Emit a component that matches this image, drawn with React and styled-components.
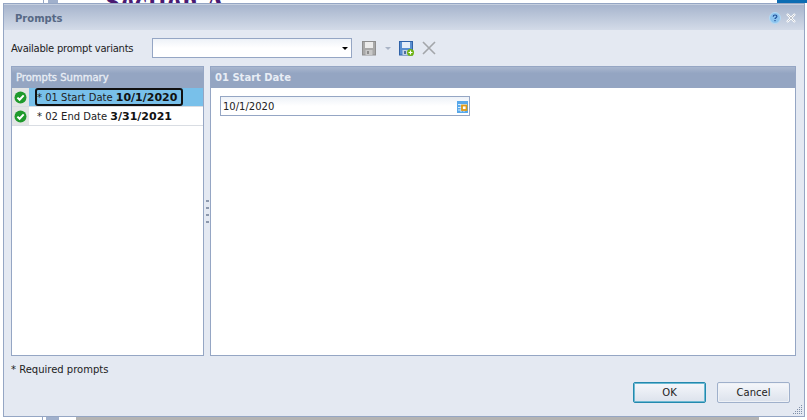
import styled, { createGlobalStyle } from "styled-components";

const Global = createGlobalStyle`
  html, body {
    margin: 0;
    padding: 0;
    width: 807px;
    height: 420px;
    overflow: hidden;
    background: #ffffff;
    font-family: "DejaVu Sans", Verdana, sans-serif;
  }
`;

const Page = styled.div`
  position: relative;
  width: 807px;
  height: 420px;
  overflow: hidden;
  background: #fff;
`;

const Backdrop = styled.div`
  position: absolute;
  inset: 0;
  overflow: hidden;
`;

const BackTitle = styled.span`
  position: absolute;
  left: 105px;
  top: -13px;
  font-family: "Liberation Serif", serif;
  font-size: 27px;
  font-weight: 700;
  color: #4a1a72;
  letter-spacing: 1.4px;
`;

const BackStrip = styled.div`
  position: absolute;
  left: ${(p) => p.$left}px;
  top: ${(p) => p.$top}px;
  width: ${(p) => p.$width}px;
  height: ${(p) => p.$height}px;
  background: ${(p) => p.$bg};
`;

const Dialog = styled.div`
  position: absolute;
  left: 3px;
  top: 3px;
  width: 802px;
  height: 414px;
  box-sizing: border-box;
  border: 1px solid #95a6c4;
  background: #e4e9f2;
  display: flex;
  flex-direction: column;
`;

const TitleBar = styled.div`
  height: 26px;
  flex: none;
  display: flex;
  align-items: center;
  justify-content: space-between;
  padding: 2px 8px 0 11px;
  box-sizing: border-box;
  background: linear-gradient(#a5b3cc, #d3dbe8);
  box-shadow: inset 0 1px 0 #c5cfdf;
`;

const Title = styled.span`
  font-size: 10px;
  font-weight: 700;
  color: #566885;
`;

const TitleIcons = styled.div`
  display: flex;
  align-items: center;
  gap: 5px;
`;

const VariantRow = styled.div`
  height: 36px;
  flex: none;
  display: flex;
  align-items: center;
  padding: 0 0 0 7px;
`;

const Label = styled.span`
  width: 141px;
  font-size: 10px;
  letter-spacing: -0.25px;
  color: #222;
`;

const Select = styled.div`
  width: 200px;
  height: 20px;
  box-sizing: border-box;
  border: 1px solid #95a6c4;
  background: linear-gradient(#eef2f8, #fff 50%);
  display: flex;
  align-items: center;
  justify-content: flex-end;
  padding-right: 3px;
`;

const Arrow = styled.span`
  width: 0;
  height: 0;
  border-left: 3px solid transparent;
  border-right: 3px solid transparent;
  border-top: 3px solid ${(p) => p.$color || "#000"};
`;

const Tools = styled.div`
  display: flex;
  align-items: center;
  margin-left: 10px;
  gap: 8px;
`;

const Panels = styled.div`
  height: 290px;
  flex: none;
  display: flex;
  gap: 6px;
  padding: 0 8px 0 7px;
`;

const Panel = styled.div`
  box-sizing: border-box;
  border: 1px solid #95a6c4;
  background: #fff;
  display: flex;
  flex-direction: column;
  ${(p) => (p.$width ? `width: ${p.$width}px; flex: none;` : "flex: 1;")}
`;

const PanelHead = styled.div`
  height: 21px;
  flex: none;
  display: flex;
  align-items: center;
  padding-left: 4px;
  font-size: 10px;
  font-weight: ${(p) => (p.$narrow ? 400 : 700)};
  color: #e8edf5;
  -webkit-text-stroke: ${(p) => (p.$narrow ? "0.35px #e8edf5" : "0")};
  background: linear-gradient(#a9b7cf 0, #94a5c2 30%, #94a5c2 100%);
`;

const SummaryRow = styled.div`
  height: 18px;
  display: flex;
  align-items: stretch;
  border-bottom: 1px solid #d9dde3;
  box-sizing: content-box;
`;

const StatusCell = styled.div`
  width: 17px;
  flex: none;
  background: #e3e5e5;
  display: flex;
  align-items: center;
  justify-content: center;
`;

const RowBody = styled.div`
  flex: 1;
  display: flex;
  align-items: center;
  padding-left: 6px;
  background: ${(p) => (p.$selected ? "#78c0ea" : "#fff")};
  font-size: 10px;
  color: #222;
`;

const RowText = styled.span`
  box-sizing: border-box;
  height: 18px;
  display: flex;
  align-items: center;
  padding: 0 1px 0 2px;
  white-space: pre;
  ${(p) =>
    p.$focused &&
    "border: 2px solid #111; border-radius: 3px; margin-left: 0; padding: 0 4px 0 0;"}

  b {
    font-size: 11px;
    color: #111;
  }
`;

const Grip = styled.div`
  position: absolute;
  left: 202px;
  top: 196px;
  display: flex;
  flex-direction: column;
  gap: 5px;

  i {
    display: block;
    width: 3px;
    height: 2px;
    background: #8c98ad;
  }
`;

const PanelBody = styled.div`
  padding: 8px 9px;
`;

const DateField = styled.div`
  width: 250px;
  height: 20px;
  box-sizing: border-box;
  border: 1px solid #95a6c4;
  background: linear-gradient(#eef2f8, #fff 50%);
  display: flex;
  align-items: center;
  justify-content: space-between;
  padding: 1px 0 0 2px;
  font-size: 10px;
  color: #222;
`;

const Required = styled.div`
  height: 26px;
  flex: none;
  display: flex;
  align-items: center;
  padding-left: 7px;
  font-size: 10px;
  color: #222;
`;

const Footer = styled.div`
  flex: 1;
  display: flex;
  justify-content: flex-end;
  gap: 11px;
  padding-right: 14px;
`;

const Button = styled.button`
  width: 73px;
  height: 21px;
  box-sizing: border-box;
  padding: 0;
  border: 1px solid ${(p) => (p.$primary ? "#2389ae" : "#9fb0cb")};
  border-radius: 2px;
  background: linear-gradient(#f5f7fb, #dce2ec);
  box-shadow: ${(p) => (p.$primary ? "inset 0 0 0 1px #6db9d2" : "inset 0 0 0 1px #eef1f6")};
  font-family: "DejaVu Sans", Verdana, sans-serif;
  font-size: 10px;
  color: #222;
`;

const Resize = styled.svg`
  position: absolute;
  right: 1px;
  bottom: 1px;
`;

const Check = () => (
  <svg width="13" height="13" viewBox="0 0 13 13">
    <circle cx="6.5" cy="6.5" r="6" fill="#1f9a2c" />
    <path d="M3.4 6.6 5.6 8.8 9.7 4.4" fill="none" stroke="#fff" strokeWidth="2" />
  </svg>
);

const SaveIcon = ({ active }) => (
  <svg width="15" height="15" viewBox="0 0 15 15">
    <rect x="0.5" y="0.5" width="13" height="13.5" fill={active ? "#5a8fd0" : "#a9a9a9"} stroke={active ? "#2f62a8" : "#8f8f8f"} />
    <rect x="3" y="1" width="8" height="6" fill={active ? "#e6eef8" : "#ececec"} />
    <rect x="3.5" y="9" width="7" height="5" fill={active ? "#c4d2e4" : "#c8c8c8"} />
    <rect x="5" y="10" width="2" height="3" fill={active ? "#4f6f9c" : "#8c8c8c"} />
    {active && <circle cx="11.5" cy="11.5" r="3.5" fill="#6cb310" />}
    {active && <path d="M11.5 9.5v4M9.5 11.5h4" stroke="#fff" strokeWidth="1.2" />}
  </svg>
);

const CloseGray = () => (
  <svg width="14" height="14" viewBox="0 0 14 14">
    <path d="M1 1 13 13M13 1 1 13" stroke="#a3a6aa" strokeWidth="1.6" />
  </svg>
);

const Help = () => (
  <svg width="12" height="12" viewBox="0 0 12 12">
    <circle cx="6" cy="6" r="5.5" fill="#8cc4ee" stroke="#b5d9f3" />
    <path d="M4.2 4.6C4.3 3.4 5.1 3 6 3c1.1 0 1.9.6 1.9 1.5C7.9 5.7 6 5.6 6 7" fill="none" stroke="#1f4f99" strokeWidth="1.2" />
    <rect x="5.4" y="8" width="1.2" height="1.2" fill="#1f4f99" />
  </svg>
);

const CloseWhite = () => (
  <svg width="10" height="10" viewBox="0 0 10 10">
    <path d="M1 1 9 9M9 1 1 9" stroke="#fff" strokeWidth="2.2" />
    <path d="M1.5 1.5 8.5 8.5M8.5 1.5 1.5 8.5" stroke="#59667a" strokeWidth="0.4" />
  </svg>
);

const Calendar = () => (
  <svg width="12" height="12" viewBox="0 0 12 12">
    <rect x="0" y="0" width="11" height="12" fill="#58a8ea" />
    <path d="M1 3.5h9M1 6.500h9M1 9h9M4 3v8M7 3v8" stroke="#d7ecfb" strokeWidth="1" />
    <rect x="5" y="4.500" width="4.500" height="4.500" fill="#fff" stroke="#e09a14" strokeWidth="1.800" />
  </svg>
);

const RESIZE_DOTS = [
  [8, 0], [6, 2], [8, 2], [4, 4], [6, 4], [8, 4], [2, 6], [4, 6], [6, 6], [8, 6], [0, 8], [2, 8], [4, 8], [6, 8], [8, 8],
];

const rows = [
  { id: 1, label: "* 01 Start Date ", value: "10/1/2020", selected: true },
  { id: 2, label: "* 02 End Date ", value: "3/31/2021" },
];

export default function App() {
  return (
    <Page>
      <Global />
      <Backdrop>
        <BackTitle>Section A</BackTitle>
        <BackStrip $left={43} $top={0} $width={1} $height={3} $bg="#95a6c4" />
        <BackStrip $left={48} $top={0} $width={10} $height={3} $bg="#a0b0cc" />
        <BackStrip $left={777} $top={0} $width={30} $height={3} $bg="#0b6cb3" />
        <BackStrip $left={42} $top={417} $width={1} $height={3} $bg="#95a6c4" />
        <BackStrip $left={46} $top={417} $width={13} $height={3} $bg="#a0b0cc" />
        <BackStrip $left={76} $top={417} $width={683} $height={3} $bg="#b4b4b4" />
      </Backdrop>
      <Dialog>
        <TitleBar>
          <Title>Prompts</Title>
          <TitleIcons>
            <Help />
            <CloseWhite />
          </TitleIcons>
        </TitleBar>
        <VariantRow>
          <Label>Available prompt variants</Label>
          <Select>
            <Arrow />
          </Select>
          <Tools>
            <SaveIcon />
            <Arrow $color="#a9b4c6" />
            <SaveIcon active />
            <CloseGray />
          </Tools>
        </VariantRow>
        <Panels>
          <Panel $width={193}>
            <PanelHead $narrow>Prompts Summary</PanelHead>
            {rows.map((r) => (
              <SummaryRow key={r.id}>
                <StatusCell>
                  <Check />
                </StatusCell>
                <RowBody $selected={r.selected}>
                  <RowText $focused={r.selected}>
                    {r.label}
                    <b>{r.value}</b>
                  </RowText>
                </RowBody>
              </SummaryRow>
            ))}
          </Panel>
          <Panel>
            <PanelHead>01 Start Date</PanelHead>
            <PanelBody>
              <DateField>
                10/1/2020
                <Calendar />
              </DateField>
            </PanelBody>
          </Panel>
        </Panels>
        <Grip>
          <i />
          <i />
          <i />
          <i />
        </Grip>
        <Required>* Required prompts</Required>
        <Footer>
          <Button $primary>OK</Button>
          <Button>Cancel</Button>
        </Footer>
        <Resize width="10" height="10" viewBox="0 0 10 10">
          {RESIZE_DOTS.map(([x, y]) => (
            <rect key={`${x}-${y}`} x={x} y={y} width="1" height="1" fill="#7f8fa8" />
          ))}
        </Resize>
      </Dialog>
    </Page>
  );
}
